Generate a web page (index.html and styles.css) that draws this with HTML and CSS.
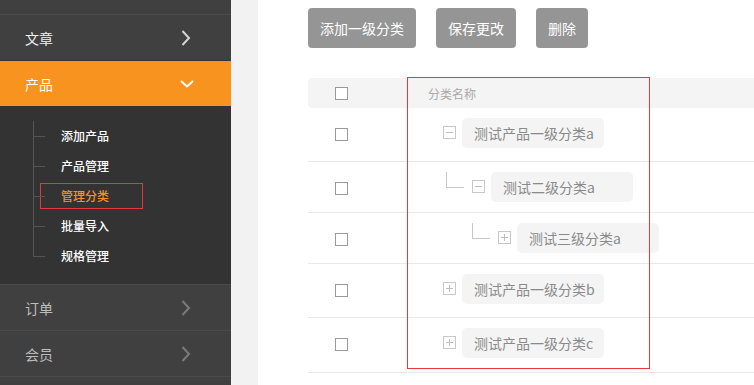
FILE: index.html
```html
<!DOCTYPE html>
<html lang="zh-CN">
<head>
<meta charset="utf-8">
<title>管理分类</title>
<link rel="stylesheet" href="styles.css">
</head>
<body>
<div class="app">
  <aside class="sidebar">
    <div class="nav-top"></div>
    <div class="nav-item bright">
      <span>文章</span>
      <svg class="chev-r" width="10" height="16" viewBox="0 0 10 16"><path d="M1.5 1 L8 8 L1.5 15" fill="none" stroke="currentColor" stroke-width="2"/></svg>
    </div>
    <div class="nav-item active">
      <span>产品</span>
      <svg class="chev-d" width="14" height="8" viewBox="0 0 14 8"><path d="M1 1 L7 6.5 L13 1" fill="none" stroke="currentColor" stroke-width="2"/></svg>
    </div>
    <ul class="submenu">
      <li>添加产品</li>
      <li>产品管理</li>
      <li class="current"><span class="mark"></span>管理分类</li>
      <li>批量导入</li>
      <li class="last">规格管理</li>
    </ul>
    <div class="nav-item dim">
      <span>订单</span>
      <svg class="chev-r" width="10" height="16" viewBox="0 0 10 16"><path d="M1.5 1 L8 8 L1.5 15" fill="none" stroke="currentColor" stroke-width="2"/></svg>
    </div>
    <div class="nav-item dim">
      <span>会员</span>
      <svg class="chev-r" width="10" height="16" viewBox="0 0 10 16"><path d="M1.5 1 L8 8 L1.5 15" fill="none" stroke="currentColor" stroke-width="2"/></svg>
    </div>
    <div class="nav-item dim"></div>
  </aside>
  <div class="gutter"></div>
  <main class="content">
    <div class="toolbar">
      <button class="btn">添加一级分类</button>
      <button class="btn">保存更改</button>
      <button class="btn">删除</button>
    </div>
    <div class="table">
      <div class="thead">
        <div class="col-check"><span class="cb"></span></div>
        <div class="col-name head-name">分类名称</div>
      </div>
      <div class="row lvl1">
        <div class="col-check"><span class="cb"></span></div>
        <div class="col-name ind1"><span class="tog minus"></span><span class="pill">测试产品一级分类a</span></div>
      </div>
      <div class="row">
        <div class="col-check"><span class="cb"></span></div>
        <div class="col-name ind2"><span class="conn"></span><span class="tog minus"></span><span class="pill">测试二级分类a</span></div>
      </div>
      <div class="row">
        <div class="col-check"><span class="cb"></span></div>
        <div class="col-name ind3"><span class="conn"></span><span class="tog plus"></span><span class="pill">测试三级分类a</span></div>
      </div>
      <div class="row lvl1">
        <div class="col-check"><span class="cb"></span></div>
        <div class="col-name ind1"><span class="tog plus"></span><span class="pill">测试产品一级分类b</span></div>
      </div>
      <div class="row lvl1 lastrow">
        <div class="col-check"><span class="cb"></span></div>
        <div class="col-name ind1"><span class="tog plus"></span><span class="pill">测试产品一级分类c</span></div>
      </div>
    </div>
    <div class="annot"></div>
  </main>
</div>
</body>
</html>
```
FILE: styles.css
```css
* { box-sizing: border-box; }
html, body { margin: 0; padding: 0; }
body {
  width: 754px;
  height: 385px;
  overflow: hidden;
  background: #fff;
  font-family: "Noto Sans CJK SC", "Microsoft YaHei", sans-serif;
}
.app { display: flex; height: 385px; overflow: hidden; }

/* Sidebar */
.sidebar {
  width: 231px;
  height: 385px;
  flex: none;
  overflow: hidden;
  background: #404040;
  display: flex;
  flex-direction: column;
}
.sidebar > * { flex-shrink: 0; }
.nav-top {
  height: 15px;
  background: #404040;
  border-bottom: 1px solid #4b4b4b;
}
.nav-item {
  height: 46px;
  display: flex;
  align-items: center;
  justify-content: space-between;
  padding: 0 40px 0 25px;
  font-size: 14px;
  background: #404040;
  border-bottom: 1px solid #4a4a4a;
}
.nav-item.bright { color: #f0f0f0; border-bottom-color: #353535; }
.nav-item.bright .chev-r { color: #d4d4d4; }
.nav-item.active {
  background: #f7931e;
  color: #fff;
  border-bottom: none;
  height: 45px;
  padding-right: 37px;
}
.nav-item.dim { color: #bdbdbd; }
.nav-item.dim .chev-r { color: #7a7a7a; }

.submenu {
  list-style: none;
  margin: 0;
  padding: 15px 0 13px;
  background: #333;
  border-bottom: 1px solid #4a4a4a;
}
.submenu li {
  position: relative;
  height: 30px;
  line-height: 30px;
  padding-left: 61px;
  font-size: 12px;
  font-weight: 500;
  color: #fff;
}
.submenu li::before {
  content: "";
  position: absolute;
  left: 33px;
  top: 0;
  bottom: 0;
  border-left: 1px solid #555;
}
.submenu li.last::before { bottom: 14px; }
.submenu li::after {
  content: "";
  position: absolute;
  left: 33px;
  top: 15px;
  width: 12px;
  border-top: 1px solid #555;
}
.submenu li.current { color: #f7931e; }
.submenu .mark {
  position: absolute;
  left: 40px;
  top: 2px;
  width: 103px;
  height: 26px;
  border: 1px solid #e8383d;
}

/* Gutter */
.gutter { width: 27px; flex: none; background: #f2f2f2; }

/* Content */
.content {
  position: relative;
  flex: 1;
  padding: 8px 0 0 50px;
  min-width: 0;
}
.toolbar { display: flex; gap: 20px; }
.btn {
  height: 40px;
  padding: 0 12px;
  border: none;
  border-radius: 4px;
  background: #959595;
  color: #fff;
  font-family: inherit;
  font-size: 14px;
}
.table { margin-top: 30px; }
.thead {
  height: 30px;
  display: flex;
  align-items: center;
  background: #f4f4f4;
  border-radius: 4px 0 0 4px;
}
.col-check {
  width: 100px;
  flex: none;
  padding-left: 27px;
  display: flex;
  align-items: center;
}
.cb {
  display: block;
  width: 13px;
  height: 13px;
  border: 1px solid #999;
  background: #fff;
}
.head-name { padding-left: 20px; font-size: 12px; color: #aaa; }

.row {
  display: flex;
  align-items: center;
  padding: 10px 0;
  border-bottom: 1px solid #e8e8e8;
}
.row.lvl1 { padding-bottom: 13px; }
.row.lastrow { padding-bottom: 14px; }
.row .col-check { padding-top: 2px; }
.col-name { display: flex; align-items: center; }
.ind1 { padding-left: 35px; }
.ind2 { padding-left: 38px; }
.ind3 { padding-left: 64px; }
.conn {
  align-self: flex-start;
  width: 18px;
  height: 16px;
  margin-right: 8px;
  border-left: 1px solid #c8c8c8;
  border-bottom: 1px solid #c8c8c8;
}
.tog {
  position: relative;
  width: 13px;
  height: 13px;
  flex: none;
  border: 1px solid #c8c8c8;
  margin-top: -1px;
}
.tog::before {
  content: "";
  position: absolute;
  left: 2px;
  right: 2px;
  top: 5px;
  border-top: 1px solid #bdbdbd;
}
.tog.plus::after {
  content: "";
  position: absolute;
  top: 2px;
  bottom: 2px;
  left: 5px;
  border-left: 1px solid #bdbdbd;
}
.pill {
  margin-left: 6px;
  width: 142px;
  height: 30px;
  line-height: 30px;
  padding: 0 12px;
  background: #f4f4f4;
  border-radius: 5px;
  font-size: 14px;
  color: #8a8a8a;
  white-space: nowrap;
}

/* Annotation frame */
.annot {
  position: absolute;
  left: 149px;
  top: 77px;
  width: 243px;
  height: 292px;
  border: 1px solid #e8383d;
  pointer-events: none;
}
```
